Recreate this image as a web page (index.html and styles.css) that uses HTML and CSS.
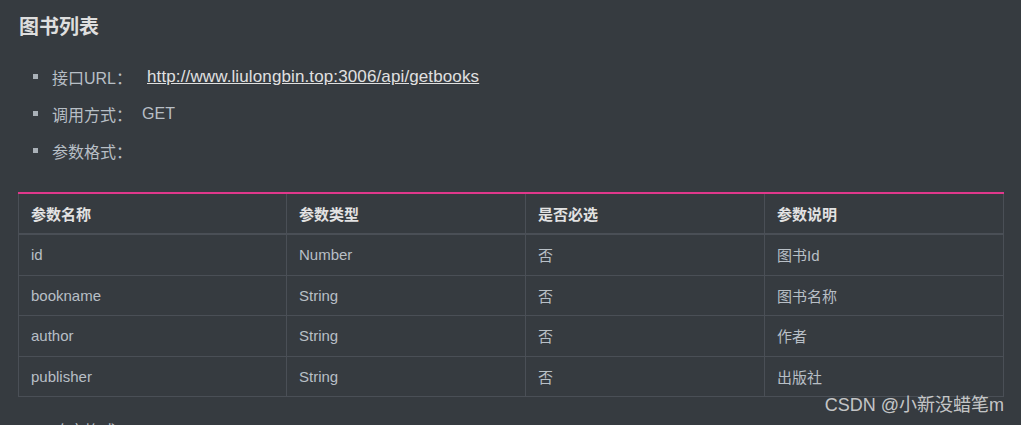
FILE: index.html
```html
<!DOCTYPE html>
<html lang="zh-CN">
<head>
<meta charset="utf-8">
<link rel="stylesheet" href="styles.css">
</head>
<body>
<div class="page">
  <h2 class="title">图书列表</h2>
  <ul class="info">
    <li class="info-item"><span class="label">接口URL：</span><a class="link" href="#">http://www.liulongbin.top:3006/api/getbooks</a></li>
    <li class="info-item"><span class="label">调用方式：</span><span class="value">GET</span></li>
    <li class="info-item"><span class="label">参数格式：</span></li>
  </ul>
  <table class="params">
    <colgroup>
      <col class="c1"><col class="c2"><col class="c3"><col class="c4">
    </colgroup>
    <thead>
      <tr><th>参数名称</th><th>参数类型</th><th>是否必选</th><th>参数说明</th></tr>
    </thead>
    <tbody>
      <tr><td>id</td><td>Number</td><td>否</td><td>图书Id</td></tr>
      <tr><td>bookname</td><td>String</td><td>否</td><td>图书名称</td></tr>
      <tr><td>author</td><td>String</td><td>否</td><td>作者</td></tr>
      <tr><td>publisher</td><td>String</td><td>否</td><td>出版社</td></tr>
    </tbody>
  </table>
  <ul class="info after">
    <li class="info-item"><span class="label">响应格式：</span></li>
  </ul>
  <div class="watermark">CSDN @小新没蜡笔m</div>
</div>
</body>
</html>
```
FILE: styles.css
```css
html, body {
  margin: 0;
  padding: 0;
  background: #363b40;
  height: 100%;
  overflow: hidden;
}
body {
  font-family: "Liberation Sans", Arial, "Noto Sans CJK SC", sans-serif;
  color: #b8bfc6;
}
.page {
  position: relative;
  padding: 0 18px;
  height: 425px;
  overflow: hidden;
}
.title {
  margin: 13px 0 0 1px;
  font-size: 20px;
  line-height: 28px;
  font-weight: bold;
  color: #dedede;
}
.info {
  list-style: none;
  margin: 17px 0 0 0;
  padding: 0;
}
.info-item {
  display: flex;
  align-items: center;
  height: 37px;
  font-size: 16px;
  padding-left: 34px;
  position: relative;
}
.info-item::before {
  content: "";
  position: absolute;
  left: 15px;
  top: 16px;
  width: 5px;
  height: 5px;
  background: #aab1b8;
}
.label {
  color: #b8bfc6;
}
.link {
  color: #e0e0e0;
  font-size: 17px;
  letter-spacing: 0.12px;
  text-decoration: underline;
  margin-left: 15px;
}
.value {
  margin-left: 10px;
}
.params {
  margin-top: 23px;
  width: 985px;
  border-collapse: collapse;
  border-top: 2px solid #e0388c;
  table-layout: fixed;
  font-size: 15px;
}
.c1 { width: 268px; }
.c2 { width: 239px; }
.c3 { width: 239px; }
.c4 { width: 239px; }
.params th, .params td {
  border: 1px solid #4a4f56;
  text-align: left;
  padding: 0 12px;
}
.params th {
  height: 39px;
  font-weight: bold;
  color: #e2e2e2;
  border-top: none;
  border-bottom: 2px solid #4a4f56;
}
.params td {
  height: 39.5px;
  color: #b8bfc6;
}
.after {
  margin-top: 14px;
}
.watermark {
  position: absolute;
  right: 17px;
  top: 393px;
  font-size: 18px;
  line-height: 24px;
  color: rgba(235, 235, 235, 0.8);
}
```
